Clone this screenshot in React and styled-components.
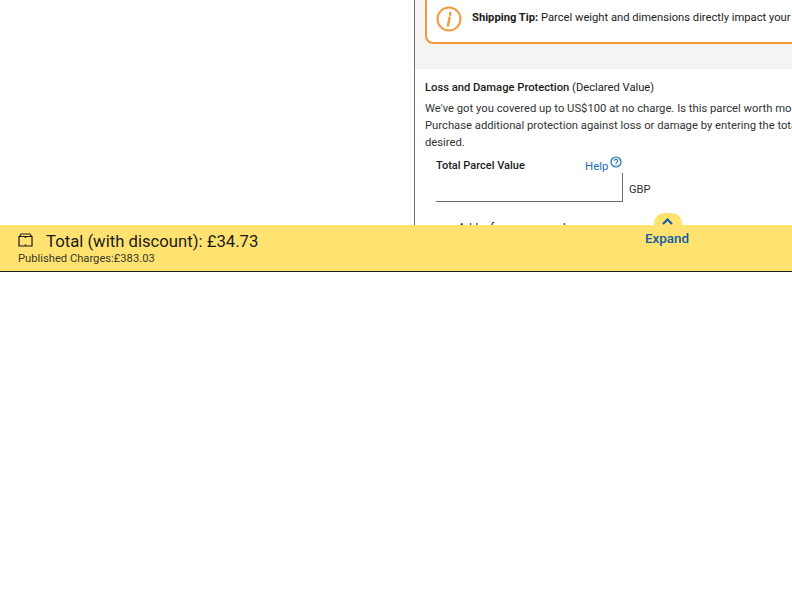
import React from "react";
import styled, { createGlobalStyle } from "styled-components";

const GlobalStyle = createGlobalStyle`
  html, body {
    margin: 0;
    background: #fff;
    font-family: Roboto, "Liberation Sans", sans-serif;
    color: #1c1c1c;
  }
`;

const Page = styled.div`
  width: 792px;
  height: 272px;
  display: flex;
  flex-direction: column;
  overflow: hidden;
`;

const Content = styled.div`
  height: 225px;
  display: flex;
  flex-shrink: 0;
  position: relative;
`;

const LeftColumn = styled.div`
  width: 414px;
  flex-shrink: 0;
  border-right: 1px solid #6e6e6e;
`;

const RightColumn = styled.div`
  flex: 1;
  min-width: 0;
  overflow: hidden;
`;

const TipSection = styled.div`
  height: 69px;
  padding-left: 10px;
  background: #f5f4f2;
  box-sizing: border-box;
`;

const TipCard = styled.div`
  height: 44px;
  box-sizing: border-box;
  display: flex;
  align-items: center;
  gap: 10px;
  padding: 0 0 5px 10px;
  background: #fff;
  border: 2px solid #f09a3a;
  border-top: 0;
  border-right: 0;
  border-radius: 0 0 0 8px;
  white-space: nowrap;
  font-size: 11.2px;
`;

const TipIcon = styled.svg`
  width: 26px;
  height: 26px;
  flex-shrink: 0;
  margin-left: -1px;
`;

const TipText = styled.span`
  margin-top: -3px;
`;

const Protection = styled.div`
  padding: 12px 0 0 10px;
`;

const Heading = styled.div`
  font-size: 11.2px;
  line-height: 14px;
  font-weight: 500;
  white-space: nowrap;

  span {
    font-weight: 400;
  }
`;

const Body = styled.p`
  margin: 5px 0 0;
  font-size: 11.25px;
  line-height: 17px;
  white-space: nowrap;
  color: #333;
`;

const ValueBlock = styled.div`
  padding: 5px 0 0 11px;
`;

const LabelRow = styled.div`
  display: flex;
  align-items: flex-start;
`;

const Label = styled.div`
  width: 149px;
  font-size: 11px;
  line-height: 14px;
  font-weight: 500;
  padding-top: 3px;
`;

const HelpLink = styled.a`
  display: flex;
  gap: 2px;
  font-size: 11.4px;
  line-height: 14px;
  padding-top: 3px;
  color: #1f70b8;
`;

const HelpIcon = styled.svg`
  width: 12px;
  height: 12px;
  margin-top: -3px;
`;

const InputRow = styled.div`
  display: flex;
  align-items: center;
  gap: 7px;
`;

const ValueInput = styled.input`
  width: 187px;
  height: 29px;
  box-sizing: border-box;
  padding: 0;
  border: 0;
  border-right: 1px solid #6e6e6e;
  border-bottom: 1px solid #6e6e6e;
  background: #fff;
  outline: none;
`;

const Currency = styled.span`
  margin: 4px 0 0 -1px;
  font-size: 11.2px;
  color: #333;
`;

const AddOn = styled.div`
  margin: 18px 0 0 22px;
  font-size: 11.4px;
  line-height: 14px;
  white-space: nowrap;
`;

const SummaryBar = styled.div`
  height: 47px;
  flex-shrink: 0;
  box-sizing: border-box;
  position: relative;
  padding: 7px 0 0 18px;
  background: #ffe26f;
  border-bottom: 1px solid #1c1c1c;
`;

const TotalRow = styled.div`
  display: flex;
  align-items: center;
  gap: 13px;
  font-size: 16.7px;
  line-height: 20px;
  color: #1c1c1c;
`;

const BoxIcon = styled.svg`
  width: 15px;
  height: 14px;
  margin-top: -5px;
`;

const Published = styled.div`
  font-size: 11.2px;
  line-height: 14px;
  color: #3a3a2a;
`;

const ExpandButton = styled.button`
  position: absolute;
  left: 645px;
  top: 7px;
  padding: 0;
  border: 0;
  background: none;
  font: 500 13.4px/14px Roboto, "Liberation Sans", sans-serif;
  color: #0f5ba7;
`;

const ExpandTab = styled.div`
  position: absolute;
  left: 654px;
  top: -12px;
  width: 28px;
  height: 12px;
  border-radius: 10px 10px 0 0;
  background: #ffe26f;
  display: flex;
  justify-content: center;
  align-items: flex-end;
`;

const Chevron = styled.svg`
  width: 11px;
  height: 7px;
  margin: 0 2px 0 0;
`;

const App = () => {
  return (
    <Page>
      <GlobalStyle />
      <Content>
        <LeftColumn />
        <RightColumn>
          <TipSection>
            <TipCard>
              <TipIcon viewBox="0 0 26 26">
                <circle cx="13" cy="13" r="11.5" fill="none" stroke="#f09a3a" strokeWidth="2" />
                <path d="M14.2 7v1.8M13.6 11.5l-1.6 8" fill="none" stroke="#f09a3a" strokeWidth="2.4" strokeLinecap="round" />
              </TipIcon>
              <TipText>
                <b>Shipping Tip:</b> Parcel weight and dimensions directly impact your shipping cost
              </TipText>
            </TipCard>
          </TipSection>
          <Protection>
            <Heading>
              Loss and Damage Protection <span>(Declared Value)</span>
            </Heading>
            <Body>
              We've got you covered up to US$100 at no charge. Is this parcel worth more?
              <br />
              Purchase additional protection against loss or damage by entering the total value
              <br />
              desired.
            </Body>
            <ValueBlock>
              <LabelRow>
                <Label>Total Parcel Value</Label>
                <HelpLink>
                  Help
                  <HelpIcon viewBox="0 0 12 12">
                    <circle cx="6" cy="6" r="5" fill="none" stroke="#1f70b8" strokeWidth="1.2" />
                    <path d="M4.4 4.8a1.6 1.6 0 1 1 2.5 1.3c-.6.4-.9.7-.9 1.3M6 8.4v1" fill="none" stroke="#1f70b8" strokeWidth="1.1" />
                  </HelpIcon>
                </HelpLink>
              </LabelRow>
              <InputRow>
                <ValueInput />
                <Currency>GBP</Currency>
              </InputRow>
              <AddOn>Add a few more words</AddOn>
            </ValueBlock>
          </Protection>
        </RightColumn>
      </Content>
      <SummaryBar>
        <ExpandTab>
          <Chevron viewBox="0 0 11 7">
            <path d="M1 6l4.5-4.5L10 6" fill="none" stroke="#0f5ba7" strokeWidth="2" />
          </Chevron>
        </ExpandTab>
        <TotalRow>
          <BoxIcon viewBox="0 0 15 14">
            <path d="M1 3.5h13v9.5H1zM1.5 3.5L3 1h9l1.5 2.5" fill="none" stroke="#1c1c1c" strokeWidth="1.2" />
            <path d="M7.5 3.5v1.6M7.5 11.4V13" fill="none" stroke="#1c1c1c" strokeWidth="1.6" />
          </BoxIcon>
          <span>Total (with discount): £34.73</span>
        </TotalRow>
        <Published>Published Charges:£383.03</Published>
        <ExpandButton>Expand</ExpandButton>
      </SummaryBar>
    </Page>
  );
};

export default App;
